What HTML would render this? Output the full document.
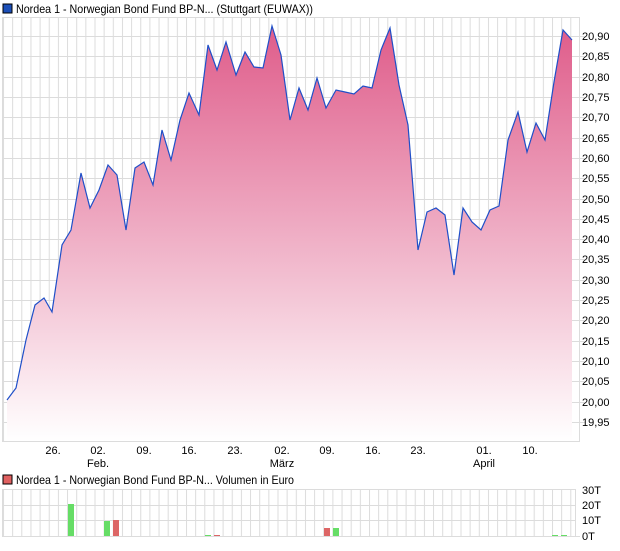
<!DOCTYPE html>
<html><head><meta charset="utf-8"><style>
body{margin:0;background:#fff;width:620px;height:546px;overflow:hidden}
text{font-family:"Liberation Sans",sans-serif;fill:#000}
</style></head><body>
<svg width="620" height="546" viewBox="0 0 620 546" xmlns="http://www.w3.org/2000/svg">
<defs>
<linearGradient id="g" gradientUnits="userSpaceOnUse" x1="0" y1="26" x2="0" y2="441">
<stop offset="0" stop-color="#df5c8a"/>
<stop offset="1" stop-color="#ffffff"/>
</linearGradient>
<pattern id="vg" x="3" y="0" width="9.15" height="546" patternUnits="userSpaceOnUse">
<line x1="0.5" y1="0" x2="0.5" y2="546" stroke="#dcdcdc" stroke-width="1"/>
</pattern>
</defs>
<rect x="3" y="4" width="9" height="9" fill="#1c4fb8" stroke="#000" stroke-width="1"/>
<text x="16" y="13" font-size="12" textLength="297" lengthAdjust="spacingAndGlyphs">Nordea 1 - Norwegian Bond Fund BP-N... (Stuttgart (EUWAX))</text>
<rect x="3" y="17" width="576" height="424" fill="url(#vg)"/>
<g stroke="#dcdcdc" stroke-width="1">
<line x1="3" y1="17.5" x2="579" y2="17.5"/>
<line x1="3" y1="36.5" x2="585" y2="36.5"/><line x1="3" y1="56.5" x2="585" y2="56.5"/><line x1="3" y1="77.5" x2="585" y2="77.5"/><line x1="3" y1="97.5" x2="585" y2="97.5"/><line x1="3" y1="117.5" x2="585" y2="117.5"/><line x1="3" y1="138.5" x2="585" y2="138.5"/><line x1="3" y1="158.5" x2="585" y2="158.5"/><line x1="3" y1="178.5" x2="585" y2="178.5"/><line x1="3" y1="199.5" x2="585" y2="199.5"/><line x1="3" y1="219.5" x2="585" y2="219.5"/><line x1="3" y1="239.5" x2="585" y2="239.5"/><line x1="3" y1="259.5" x2="585" y2="259.5"/><line x1="3" y1="280.5" x2="585" y2="280.5"/><line x1="3" y1="300.5" x2="585" y2="300.5"/><line x1="3" y1="320.5" x2="585" y2="320.5"/><line x1="3" y1="341.5" x2="585" y2="341.5"/><line x1="3" y1="361.5" x2="585" y2="361.5"/><line x1="3" y1="381.5" x2="585" y2="381.5"/><line x1="3" y1="402.5" x2="585" y2="402.5"/><line x1="3" y1="422.5" x2="585" y2="422.5"/>
<line x1="2.5" y1="17" x2="2.5" y2="441"/><line x1="579.5" y1="17" x2="579.5" y2="441"/>
<line x1="2" y1="441.5" x2="580" y2="441.5"/>
</g>
<polygon fill="url(#g)" points="7,441 7,400 16,388 26,340 35,305 44,298 52,312 62,245 71,230 81,173 90,208 99,190 108,165 117,175 126,230 135,168 144,162 153,185 162,130 171,160 180,120 189,93 199,115 208,45 217,70 226,42 236,75 245,52 254,67 263,68 272,26 281,55 290,120 299,88 308,110 317,78 326,108 336,90 345,92 354,94 363,86 372,88 381,50 390,28 399,85 408,125 418,250 427,212 436,208 445,215 454,275 463,208 472,222 481,230 490,210 499,206 508,140 518,112 527,152 536,123 545,140 554,82 563,30 572,40 572,441"/>
<polyline fill="none" stroke="#1f4fc8" stroke-width="1.2" points="7,400 16,388 26,340 35,305 44,298 52,312 62,245 71,230 81,173 90,208 99,190 108,165 117,175 126,230 135,168 144,162 153,185 162,130 171,160 180,120 189,93 199,115 208,45 217,70 226,42 236,75 245,52 254,67 263,68 272,26 281,55 290,120 299,88 308,110 317,78 326,108 336,90 345,92 354,94 363,86 372,88 381,50 390,28 399,85 408,125 418,250 427,212 436,208 445,215 454,275 463,208 472,222 481,230 490,210 499,206 508,140 518,112 527,152 536,123 545,140 554,82 563,30 572,40"/>
<g font-size="11">
<text x="582" y="40">20,90</text><text x="582" y="60">20,85</text><text x="582" y="81">20,80</text><text x="582" y="101">20,75</text><text x="582" y="121">20,70</text><text x="582" y="142">20,65</text><text x="582" y="162">20,60</text><text x="582" y="182">20,55</text><text x="582" y="203">20,50</text><text x="582" y="223">20,45</text><text x="582" y="243">20,40</text><text x="582" y="263">20,35</text><text x="582" y="284">20,30</text><text x="582" y="304">20,25</text><text x="582" y="324">20,20</text><text x="582" y="345">20,15</text><text x="582" y="365">20,10</text><text x="582" y="385">20,05</text><text x="582" y="406">20,00</text><text x="582" y="426">19,95</text>
</g>
<g font-size="11" text-anchor="middle">
<text x="53" y="454">26.</text><text x="98" y="454">02.</text><text x="144" y="454">09.</text><text x="189" y="454">16.</text><text x="235" y="454">23.</text><text x="282" y="454">02.</text><text x="327" y="454">09.</text><text x="373" y="454">16.</text><text x="418" y="454">23.</text><text x="484" y="454">01.</text><text x="530" y="454">10.</text>
<text x="98" y="467">Feb.</text><text x="282" y="467">März</text><text x="484" y="467">April</text>
</g>
<rect x="3" y="475" width="9" height="9" fill="#e06060" stroke="#000" stroke-width="1"/>
<text x="16" y="484" font-size="12" textLength="278" lengthAdjust="spacingAndGlyphs">Nordea 1 - Norwegian Bond Fund BP-N... Volumen in Euro</text>
<rect x="3" y="489" width="572" height="47" fill="url(#vg)"/>
<g stroke="#dcdcdc" stroke-width="1">
<line x1="3" y1="489.5" x2="575" y2="489.5"/><line x1="3" y1="505.5" x2="575" y2="505.5"/><line x1="3" y1="520.5" x2="575" y2="520.5"/><line x1="2" y1="536.5" x2="580" y2="536.5"/>
<line x1="2.5" y1="489" x2="2.5" y2="537"/><line x1="575.5" y1="489" x2="575.5" y2="537"/>
</g>
<g>
<rect x="68" y="504" width="6" height="32" fill="#66dd66"/>
<rect x="104" y="521" width="6" height="15" fill="#66dd66"/>
<rect x="113" y="520" width="6" height="16" fill="#dd6666"/>
<rect x="205" y="535" width="6" height="1" fill="#66dd66"/>
<rect x="214" y="535" width="6" height="1" fill="#dd6666"/>
<rect x="324" y="528" width="6" height="8" fill="#dd6666"/>
<rect x="333" y="528" width="6" height="8" fill="#66dd66"/>
<rect x="552" y="535" width="6" height="1" fill="#66dd66"/>
<rect x="561" y="535" width="6" height="1" fill="#66dd66"/>
</g>
<g font-size="11">
<text x="582" y="494">30T</text><text x="582" y="509">20T</text><text x="582" y="524">10T</text><text x="582" y="540">0T</text>
</g>
</svg>
</body></html>
